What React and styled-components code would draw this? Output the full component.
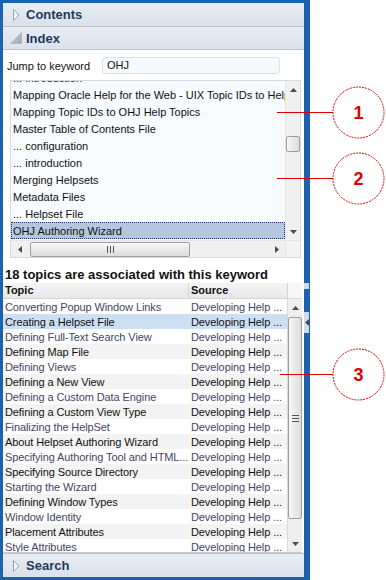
import React from 'react';
import styled, { createGlobalStyle, css } from 'styled-components';

const GlobalStyle = createGlobalStyle`
  html, body { margin: 0; padding: 0; background: #fff; }
  body { font-family: "Liberation Sans", Arial, sans-serif; }
  *, *::before, *::after { box-sizing: border-box; }
`;

const Stage = styled.div`
  position: relative;
  width: 386px;
  height: 580px;
  overflow: hidden;
  background: #fff;
`;

const Frame = styled.div`
  width: 310px;
  height: 580px;
  background: #1b63b1;
  padding: 3px 6px 3px 3px;
`;

const Panel = styled.div`
  height: 100%;
  display: flex;
  flex-direction: column;
  background: #fff;
  overflow: hidden;
`;

const PaneHeader = styled.div`
  flex: none;
  height: ${(p) => p.$h}px;
  display: flex;
  align-items: center;
  gap: 4px;
  padding-left: 7px;
  background: linear-gradient(#e9edf3, #dae1ea);
  ${(p) =>
    p.$bottom
      ? css`border-top: 1px solid #b5c2d1;`
      : css`border-bottom: 1px solid #b5c2d1;`}
  font-weight: bold;
  font-size: 13px;
  color: #1c3b5e;
`;

const HeaderIcon = styled.svg`
  width: 12px;
  height: 12px;
  flex: none;
`;

const IndexBody = styled.div`
  flex: 1;
  min-height: 0;
  display: flex;
  flex-direction: column;
`;

const JumpRow = styled.div`
  flex: none;
  display: flex;
  align-items: center;
  height: 17px;
  margin: 7px 0 0 4px;
`;

const JumpLabel = styled.label`
  width: 95px;
  font-size: 11px;
  color: #111;
`;

const KeywordInput = styled.div`
  width: 178px;
  height: 17px;
  border: 1px solid #d8e0e8;
  border-radius: 3px;
  background: #f6fafd;
  font-size: 11px;
  line-height: 15px;
  padding: 0 4px;
  color: #111;
`;

const KeywordList = styled.div`
  flex: none;
  margin: 6px 3px 0 7px;
  height: 178px;
  border: 1px solid #d3dae2;
  background: #f7fbfe;
  display: grid;
  grid-template-columns: 1fr 15px;
  grid-template-rows: 1fr 17px;
`;

const ListViewport = styled.div`
  overflow: hidden;
  min-width: 0;
`;

const ListItems = styled.ul`
  list-style: none;
  margin: -12px 0 0;
  padding: 0;
`;

const ListItem = styled.li`
  height: 17px;
  line-height: 17px;
  padding: 0 1px;
  border: 1px solid transparent;
  white-space: nowrap;
  font-size: 11px;
  color: #111;
  ${(p) =>
    p.$selected &&
    css`
      background: #b5c7de;
      border: 1px dotted #1f3578;
    `}
`;

const VScroll = styled.div`
  display: flex;
  flex-direction: column;
  align-items: center;
  background: #f0f0f0;
  border-left: 1px solid #e4e4e4;
`;

const HScroll = styled.div`
  display: flex;
  align-items: center;
  background: #f0f0f0;
  border-top: 1px solid #e4e4e4;
`;

const Corner = styled.div`
  background: #f3f3f3;
  border-top: 1px solid #e4e4e4;
  border-left: 1px solid #e4e4e4;
`;

const ArrowBox = styled.div`
  flex: none;
  width: ${(p) => (p.$horizontal ? '17px' : '100%')};
  height: ${(p) => (p.$horizontal ? '100%' : '17px')};
  display: flex;
  align-items: center;
  justify-content: center;
`;

const Spacer = styled.div`
  flex: 1;
`;

const Thumb = styled.div`
  flex: none;
  border: 1px solid #9e9e9e;
  border-radius: 2px;
  display: flex;
  align-items: center;
  justify-content: center;
  ${(p) =>
    p.$horizontal
      ? css`
          height: 15px;
          width: ${p.$size}px;
          margin-left: ${p.$offset}px;
          background: linear-gradient(#f8f8f8, #dcdcdc);
        `
      : css`
          width: 14px;
          height: ${p.$size}px;
          margin-top: ${p.$offset}px;
          background: linear-gradient(90deg, #f8f8f8, #dcdcdc);
        `}
`;

const Grip = styled.svg`
  display: block;
`;

const ResultTitle = styled.div`
  flex: none;
  height: 17px;
  margin-top: 8px;
  padding-left: 2px;
  font-size: 13px;
  line-height: 17px;
  font-weight: bold;
  color: #111;
  white-space: nowrap;
`;

const Results = styled.div`
  flex: 1;
  min-height: 0;
  margin-right: 2px;
  display: grid;
  grid-template-columns: 1fr 15px;
  grid-template-rows: 16px 1fr;
  border-bottom: 1px solid #c9c9c9;
`;

const Row = styled.div`
  display: grid;
  grid-template-columns: 186px 1fr;
  height: 15px;
  font-size: 11px;
  line-height: 16px;
  letter-spacing: -0.1px;
  white-space: nowrap;
  background: ${(p) => (p.$selected ? '#cce0f3' : p.$alt ? '#f3f3f3' : '#fff')};
  color: ${(p) => (p.$alt || p.$selected ? '#111' : '#45455f')};
`;

const HeadRow = styled(Row)`
  height: 16px;
  line-height: 15px;
  letter-spacing: 0;
  background: linear-gradient(#f4f4f4, #e8e8e8);
  border-bottom: 1px solid #d6d6d6;
  font-weight: bold;
  color: #111;
`;

const Cell = styled.div`
  overflow: hidden;
  padding-left: 2px;
  ${(p) => p.$divider && css`border-right: 1px solid #d2d2d2;`}
`;

const HeadCorner = styled.div`
  background: #f7f7f7;
  border-left: 1px solid #d2d2d2;
  border-bottom: 1px solid #d6d6d6;
`;

const RowsViewport = styled.div`
  overflow: hidden;
  min-width: 0;
`;

const TableScroll = styled(VScroll)`
  background: #eeeeee;
  border-left: 1px solid #d8d8d8;
`;

const SplitterTab = styled.div`
  position: absolute;
  left: 304px;
  top: ${(p) => p.$top}px;
  width: 5px;
  height: ${(p) => p.$h}px;
  background: #cfdbe9;
  display: flex;
  align-items: center;
  justify-content: center;
`;

const Callouts = styled.svg`
  position: absolute;
  left: 0;
  top: 0;
  pointer-events: none;
`;

function Arrow({ dir }) {
  const pts = {
    up: '0,4 3.5,0 7,4',
    down: '0,0 7,0 3.5,4',
    left: '4,0 4,7 0,3.5',
    right: '0,0 4,3.5 0,7',
  }[dir];
  const horiz = dir === 'left' || dir === 'right';
  return (
    <svg width={horiz ? 4 : 7} height={horiz ? 7 : 4} viewBox={horiz ? '0 0 4 7' : '0 0 7 4'}>
      <polygon points={pts} fill="#4a4a4a" />
    </svg>
  );
}

function OutlineChevron() {
  return (
    <HeaderIcon viewBox="0 0 12 12">
      <defs>
        <linearGradient id="chevfill" x1="0" y1="0" x2="1" y2="0">
          <stop offset="0" stopColor="#ffffff" />
          <stop offset="1" stopColor="#e3e9f0" />
        </linearGradient>
      </defs>
      <polygon points="3.5,0.5 9,6 3.5,11.5" fill="url(#chevfill)" stroke="#8fa3bc" strokeWidth="1" />
    </HeaderIcon>
  );
}

function OpenChevron() {
  return (
    <HeaderIcon viewBox="0 0 12 12">
      <defs>
        <linearGradient id="openfill" x1="0" y1="0" x2="1" y2="1">
          <stop offset="0" stopColor="#d8dde3" />
          <stop offset="1" stopColor="#98a2ae" />
        </linearGradient>
      </defs>
      <polygon points="11.5,0.5 11.5,11.5 0.5,11.5" fill="url(#openfill)" stroke="#a7b0ba" strokeWidth="0.6" />
    </HeaderIcon>
  );
}

const keywords = [
  '... introduction',
  'Mapping Oracle Help for the Web - UIX Topic IDs to Help',
  'Mapping Topic IDs to OHJ Help Topics',
  'Master Table of Contents File',
  '... configuration',
  '... introduction',
  'Merging Helpsets',
  'Metadata Files',
  '... Helpset File',
  'OHJ Authoring Wizard',
];

const topics = [
  'Converting Popup Window Links',
  'Creating a Helpset File',
  'Defining Full-Text Search View',
  'Defining Map File',
  'Defining Views',
  'Defining a New View',
  'Defining a Custom Data Engine',
  'Defining a Custom View Type',
  'Finalizing the HelpSet',
  'About Helpset Authoring Wizard',
  'Specifying Authoring Tool and HTML...',
  'Specifying Source Directory',
  'Starting the Wizard',
  'Defining Window Types',
  'Window Identity',
  'Placement Attributes',
  'Style Attributes',
];

const callouts = [
  { n: '1', y: 112, x1: 277 },
  { n: '2', y: 178, x1: 277 },
  { n: '3', y: 374, x1: 280 },
];

export default function App() {
  return (
    <Stage>
      <GlobalStyle />
      <Frame>
        <Panel>
          <PaneHeader $h={24}>
            <OutlineChevron />
            Contents
          </PaneHeader>
          <PaneHeader $h={23}>
            <OpenChevron />
            Index
          </PaneHeader>
          <IndexBody>
            <JumpRow>
              <JumpLabel>Jump to keyword</JumpLabel>
              <KeywordInput>OHJ</KeywordInput>
            </JumpRow>
            <KeywordList>
              <ListViewport>
                <ListItems>
                  {keywords.map((k, i) => (
                    <ListItem key={i} $selected={i === keywords.length - 1}>
                      {k}
                    </ListItem>
                  ))}
                </ListItems>
              </ListViewport>
              <VScroll>
                <ArrowBox><Arrow dir="up" /></ArrowBox>
                <Thumb $size={16} $offset={38} />
                <Spacer />
                <ArrowBox><Arrow dir="down" /></ArrowBox>
              </VScroll>
              <HScroll>
                <ArrowBox $horizontal><Arrow dir="left" /></ArrowBox>
                <Thumb $horizontal $size={160} $offset={2}>
                  <Grip width="7" height="7" viewBox="0 0 7 7">
                    <rect x="0" y="0" width="1" height="7" fill="#555" />
                    <rect x="3" y="0" width="1" height="7" fill="#555" />
                    <rect x="6" y="0" width="1" height="7" fill="#555" />
                  </Grip>
                </Thumb>
                <Spacer />
                <ArrowBox $horizontal><Arrow dir="right" /></ArrowBox>
              </HScroll>
              <Corner />
            </KeywordList>
            <ResultTitle>18 topics are associated with this keyword</ResultTitle>
            <Results>
              <HeadRow>
                <Cell $divider>Topic</Cell>
                <Cell>Source</Cell>
              </HeadRow>
              <HeadCorner />
              <RowsViewport>
                {topics.map((t, i) => (
                  <Row key={i} $alt={i % 2 === 1} $selected={i === 1}>
                    <Cell>{t}</Cell>
                    <Cell>Developing Help ...</Cell>
                  </Row>
                ))}
              </RowsViewport>
              <TableScroll>
                <ArrowBox><Arrow dir="up" /></ArrowBox>
                <Thumb $size={202} $offset={1}>
                  <Grip width="7" height="7" viewBox="0 0 7 7">
                    <rect x="0" y="0" width="7" height="1" fill="#555" />
                    <rect x="0" y="3" width="7" height="1" fill="#555" />
                    <rect x="0" y="6" width="7" height="1" fill="#555" />
                  </Grip>
                </Thumb>
                <Spacer />
                <ArrowBox><Arrow dir="down" /></ArrowBox>
              </TableScroll>
            </Results>
          </IndexBody>
          <PaneHeader $h={24} $bottom>
            <OutlineChevron />
            Search
          </PaneHeader>
        </Panel>
      </Frame>
      <SplitterTab $top={283} $h={6} />
      <SplitterTab $top={312} $h={21}>
        <Arrow dir="left" />
      </SplitterTab>
      <Callouts width="386" height="580" viewBox="0 0 386 580">
        {callouts.map((c) => (
          <g key={c.n}>
            <line x1={c.x1} y1={c.y + 0.5} x2={333} y2={c.y + 0.5} stroke="#e00000" strokeWidth="1" />
            <circle cx={358.5} cy={c.y + 0.5} r={25.5} fill="none" stroke="#e00000" strokeWidth="1" strokeDasharray="2 1" />
            <text
              x={358.5}
              y={c.y + 7}
              textAnchor="middle"
              fontFamily="Liberation Sans, Arial, sans-serif"
              fontWeight="bold"
              fontSize="18"
              fill="#e00000"
            >
              {c.n}
            </text>
          </g>
        ))}
      </Callouts>
    </Stage>
  );
}
